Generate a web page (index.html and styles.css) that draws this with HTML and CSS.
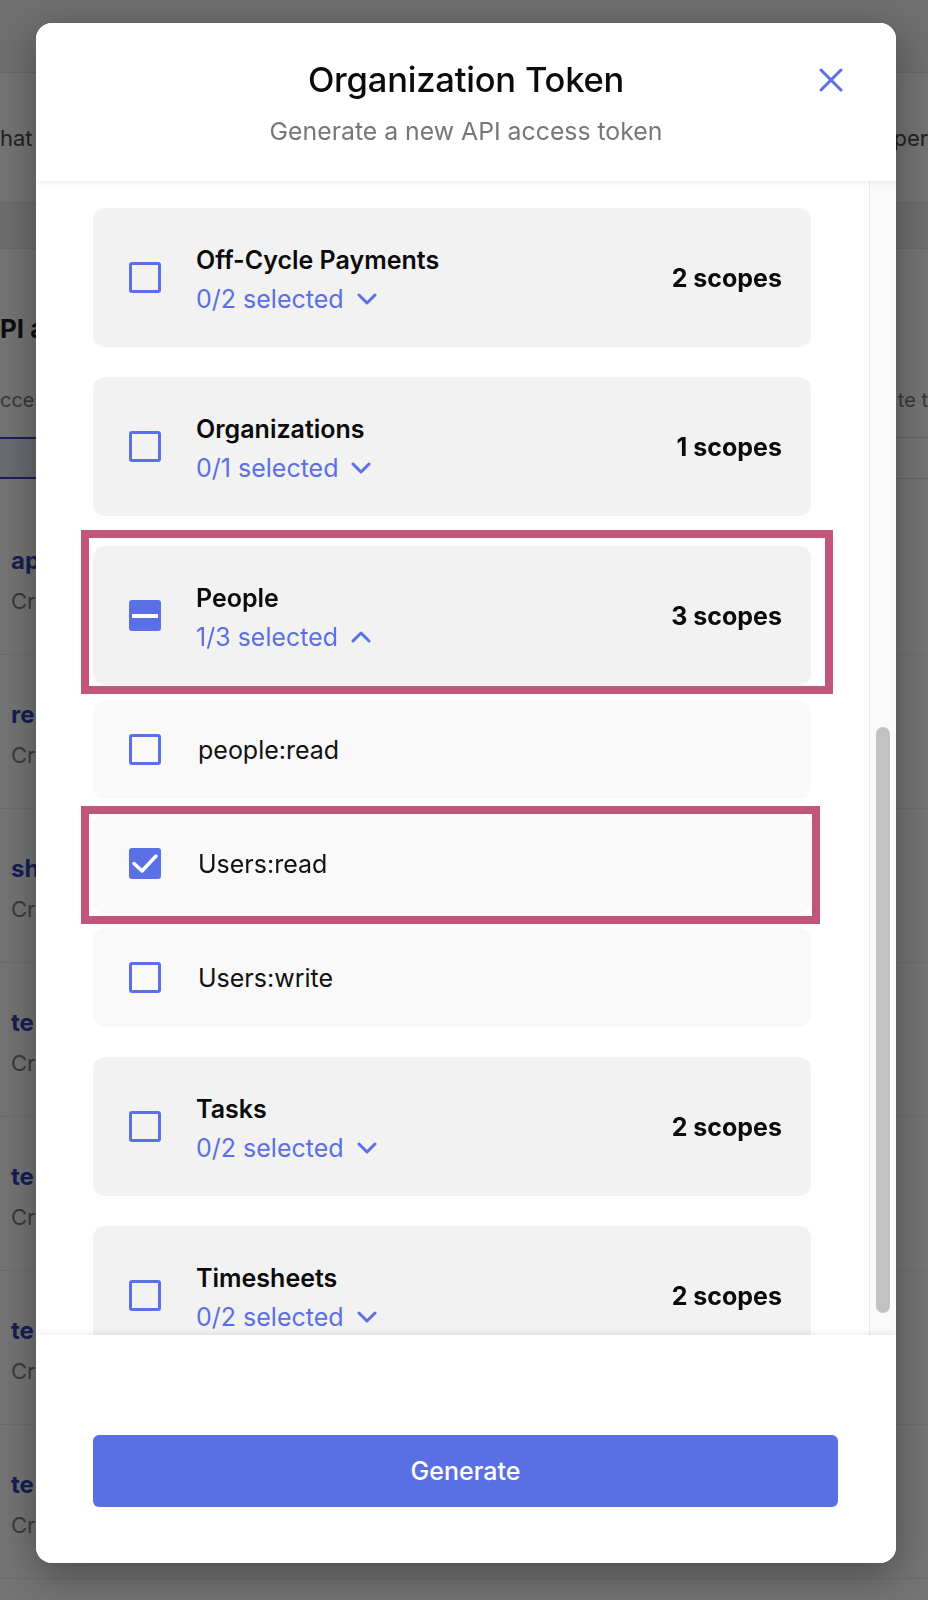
FILE: index.html
```html
<!DOCTYPE html>
<html lang="en">
<head>
<meta charset="utf-8">
<title>Organization Token</title>
<link rel="stylesheet" href="styles.css">
</head>
<body>
<div class="page">
  <div class="topbar"></div>
  <div class="intro"><span class="frag">hat</span><span class="frag">per</span></div>
  <div class="band"></div>
  <div class="section">
    <div class="sec-title">PI a</div>
    <div class="sec-desc"><span>cces</span><span>te t</span></div>
    <div class="sec-field"><span class="sec-field-active"></span></div>
  </div>
  <ul class="tokens">
    <li class="token"><span class="token-name">ap</span><span class="token-meta">Cr</span></li>
    <li class="token"><span class="token-name">re</span><span class="token-meta">Cr</span></li>
    <li class="token"><span class="token-name">sh</span><span class="token-meta">Cr</span></li>
    <li class="token"><span class="token-name">te</span><span class="token-meta">Cr</span></li>
    <li class="token"><span class="token-name">te</span><span class="token-meta">Cr</span></li>
    <li class="token"><span class="token-name">te</span><span class="token-meta">Cr</span></li>
    <li class="token"><span class="token-name">te</span><span class="token-meta">Cr</span></li>
  </ul>
</div>

<div class="overlay">
  <div class="modal">
    <header class="modal-header">
      <h1 class="modal-title">Organization Token</h1>
      <button class="close" aria-label="Close">
        <svg width="24" height="24" viewBox="0 0 24 24"><path d="M2 2 L22 22 M22 2 L2 22" stroke="#5b6fe6" stroke-width="3" stroke-linecap="round" fill="none"/></svg>
      </button>
      <p class="modal-sub">Generate a new API access token</p>
    </header>

    <div class="modal-body">
      <div class="scroll">
        <div class="group">
          <div class="card">
            <span class="cb"></span>
            <div class="card-text">
              <div class="card-title">Off-Cycle Payments</div>
              <div class="card-sel">0/2 selected
                <svg class="chev" width="20" height="12" viewBox="0 0 20 12"><path d="M2 2 L10 10 L18 2" stroke="#5b6fe6" stroke-width="3" stroke-linecap="round" stroke-linejoin="round" fill="none"/></svg>
              </div>
            </div>
            <div class="card-count">2 scopes</div>
          </div>
        </div>

        <div class="group">
          <div class="card">
            <span class="cb"></span>
            <div class="card-text">
              <div class="card-title">Organizations</div>
              <div class="card-sel">0/1 selected
                <svg class="chev" width="20" height="12" viewBox="0 0 20 12"><path d="M2 2 L10 10 L18 2" stroke="#5b6fe6" stroke-width="3" stroke-linecap="round" stroke-linejoin="round" fill="none"/></svg>
              </div>
            </div>
            <div class="card-count">1 scopes</div>
          </div>
        </div>

        <div class="group group-open">
          <div class="card">
            <span class="mark mark-people"></span>
            <span class="cb cb-filled">
              <svg width="32" height="32" viewBox="0 0 32 32"><rect x="3" y="14" width="26" height="4" fill="#fff"/></svg>
            </span>
            <div class="card-text">
              <div class="card-title">People</div>
              <div class="card-sel">1/3 selected
                <svg class="chev" width="20" height="12" viewBox="0 0 20 12"><path d="M2 10 L10 2 L18 10" stroke="#5b6fe6" stroke-width="3" stroke-linecap="round" stroke-linejoin="round" fill="none"/></svg>
              </div>
            </div>
            <div class="card-count">3 scopes</div>
          </div>
          <div class="scope">
            <span class="cb"></span>
            <span class="scope-name">people:read</span>
          </div>
          <div class="scope">
            <span class="mark mark-users"></span>
            <span class="cb cb-filled">
              <svg width="32" height="32" viewBox="0 0 32 32"><path d="M5 15.5 L13 23 L27 8" stroke="#fff" stroke-width="3.5" stroke-linecap="round" stroke-linejoin="round" fill="none"/></svg>
            </span>
            <span class="scope-name">Users:read</span>
          </div>
          <div class="scope">
            <span class="cb"></span>
            <span class="scope-name">Users:write</span>
          </div>
        </div>

        <div class="group">
          <div class="card">
            <span class="cb"></span>
            <div class="card-text">
              <div class="card-title">Tasks</div>
              <div class="card-sel">0/2 selected
                <svg class="chev" width="20" height="12" viewBox="0 0 20 12"><path d="M2 2 L10 10 L18 2" stroke="#5b6fe6" stroke-width="3" stroke-linecap="round" stroke-linejoin="round" fill="none"/></svg>
              </div>
            </div>
            <div class="card-count">2 scopes</div>
          </div>
        </div>

        <div class="group">
          <div class="card">
            <span class="cb"></span>
            <div class="card-text">
              <div class="card-title">Timesheets</div>
              <div class="card-sel">0/2 selected
                <svg class="chev" width="20" height="12" viewBox="0 0 20 12"><path d="M2 2 L10 10 L18 2" stroke="#5b6fe6" stroke-width="3" stroke-linecap="round" stroke-linejoin="round" fill="none"/></svg>
              </div>
            </div>
            <div class="card-count">2 scopes</div>
          </div>
        </div>
      </div>
      <div class="track"><div class="thumb"></div></div>
    </div>

    <footer class="modal-footer">
      <button class="generate">Generate</button>
    </footer>
  </div>
</div>
</body>
</html>
```

FILE: styles.css
```css
* { box-sizing: border-box; }

html, body {
  margin: 0;
  padding: 0;
  width: 928px;
  height: 1600px;
  overflow: hidden;
  font-family: "Inter", "Noto Sans", "Liberation Sans", sans-serif;
  background: #ffffff;
}

/* ---------- background page ---------- */
.page {
  width: 928px;
  height: 1600px;
  background: #ffffff;
}

.topbar {
  height: 73px;
  background: #f4f4f4;
  border-bottom: 1px solid #e2e2e2;
}

.intro {
  height: 130px;
  display: flex;
  justify-content: space-between;
  align-items: center;
  font-size: 22px;
  color: #4a4a4a;
  border-bottom: 1px solid #e4e4e4;
}

.band {
  height: 46px;
  background: #f2f2f2;
  border-bottom: 1px solid #e4e4e4;
}

.section {
  padding-top: 62px;
}
.sec-title {
  font-size: 26px;
  font-weight: 700;
  color: #1f1f1f;
  line-height: 36px;
}
.sec-desc {
  display: flex;
  justify-content: space-between;
  font-size: 20px;
  color: #7a7a7a;
  line-height: 30px;
  margin-top: 38px;
}

.sec-field {
  margin-top: 22px;
  height: 42px;
  border-top: 1px solid #dcdcdc;
  border-bottom: 1px solid #dcdcdc;
  display: flex;
}
.sec-field-active {
  width: 36px;
  margin-top: -1px;
  margin-bottom: -1px;
  border-top: 2px solid #3747b8;
  border-bottom: 2px solid #3747b8;
  background: #e9ecfb;
}

.tokens {
  list-style: none;
  margin: 22px 0 0 0;
  padding: 0;
}
.token {
  height: 154px;
  padding: 42px 11px 0 11px;
  display: flex;
  flex-direction: column;
  border-bottom: 1px solid #eeeeee;
}
.token-name {
  font-size: 24px;
  font-weight: 700;
  color: #3245b8;
  line-height: 36px;
}
.token-meta {
  font-size: 22px;
  color: #808080;
  line-height: 32px;
  margin-top: 6px;
}

/* ---------- overlay + modal ---------- */
.overlay {
  position: fixed;
  inset: 0;
  background: rgba(0, 0, 0, 0.55);
  padding: 23px 32px 0 36px;
}

.modal {
  width: 860px;
  height: 1540px;
  background: #ffffff;
  border-radius: 16px;
  box-shadow: 0 12px 40px rgba(0, 0, 0, 0.35);
  display: flex;
  flex-direction: column;
  overflow: hidden;
}

.modal-header {
  height: 158px;
  flex: none;
  display: grid;
  grid-template-columns: 1fr auto 1fr;
  grid-template-rows: 40px 30px;
  row-gap: 16px;
  padding: 37px 53px 0 53px;
  position: relative;
  z-index: 2;
  box-shadow: 0 2px 6px rgba(0, 0, 0, 0.07);
  background: #fff;
}
.modal-title {
  grid-column: 2;
  grid-row: 1;
  margin: 0;
  font-size: 34.5px;
  font-weight: 500;
  line-height: 40px;
  color: #0b0b0b;
  text-align: center;
  letter-spacing: -0.2px;
}
.modal-sub {
  grid-column: 1 / 4;
  grid-row: 2;
  margin: 0;
  font-size: 24.8px;
  line-height: 30px;
  color: #777777;
  text-align: center;
}
.close {
  grid-column: 3;
  grid-row: 1;
  justify-self: end;
  align-self: center;
  width: 24px;
  height: 24px;
  padding: 0;
  border: 0;
  background: none;
  display: block;
}
.close svg { display: block; }

.modal-body {
  flex: 1;
  display: flex;
  min-height: 0;
  position: relative;
  z-index: 1;
}
.scroll {
  flex: 1;
  overflow: hidden;
  padding: 27px 58px 0 57px;
  display: flex;
  flex-direction: column;
  gap: 30px;
}
.track {
  width: 27px;
  flex: none;
  background: #fafafa;
  border-left: 1px solid #e9e9e9;
  padding: 546px 0 0 6px;
}
.thumb {
  width: 14px;
  height: 586px;
  border-radius: 7px;
  background: #c2c2c2;
}

.group {
  display: flex;
  flex-direction: column;
  gap: 15px;
  flex: none;
}

.card {
  position: relative;
  height: 139px;
  flex: none;
  background: #f2f2f2;
  border-radius: 12px;
  display: flex;
  align-items: center;
  padding: 0 29px 0 36px;
}
.cb {
  width: 32px;
  height: 31px;
  flex: none;
  border: 3px solid #5b6fe6;
  border-radius: 3px;
  display: block;
}
.cb-filled {
  background: #5b6fe6;
  border: 0;
}
.cb-filled svg { display: block; }

.card-text {
  margin-left: 35px;
  flex: 1;
  margin-top: 4px;
}
.card-title {
  font-size: 25px;
  font-weight: 600;
  line-height: 39px;
  color: #0b0b0b;
}
.card-sel {
  font-size: 25px;
  line-height: 39px;
  color: #5b6fe6;
  display: flex;
  align-items: center;
}
.chev {
  margin-left: 13px;
  display: block;
}
.card-count {
  font-size: 25px;
  font-weight: 700;
  color: #0b0b0b;
}

.scope {
  position: relative;
  height: 99px;
  flex: none;
  background: #f9f9f9;
  border-radius: 12px;
  display: flex;
  align-items: center;
  padding: 0 29px 0 36px;
}
.scope-name {
  margin-left: 37px;
  font-size: 25px;
  color: #111111;
}

/* annotation outlines */
.mark {
  position: absolute;
  border: 8px solid #c1567a;
  pointer-events: none;
}
.mark-people {
  left: -12px;
  right: -22px;
  top: -16px;
  bottom: -9px;
}
.mark-users {
  left: -12px;
  right: -9px;
  top: -8px;
  bottom: -11px;
}

.modal-footer {
  height: 228px;
  flex: none;
  padding: 100px 58px 0 57px;
  position: relative;
  z-index: 2;
  background: #fff;
  box-shadow: 0 -2px 6px rgba(0, 0, 0, 0.07);
}
.generate {
  width: 100%;
  height: 72px;
  border: 0;
  border-radius: 6px;
  background: #5b6fe5;
  color: #ffffff;
  font-family: "Inter", "Noto Sans", "Liberation Sans", sans-serif;
  font-size: 25px;
  font-weight: 500;
  display: block;
}
```
